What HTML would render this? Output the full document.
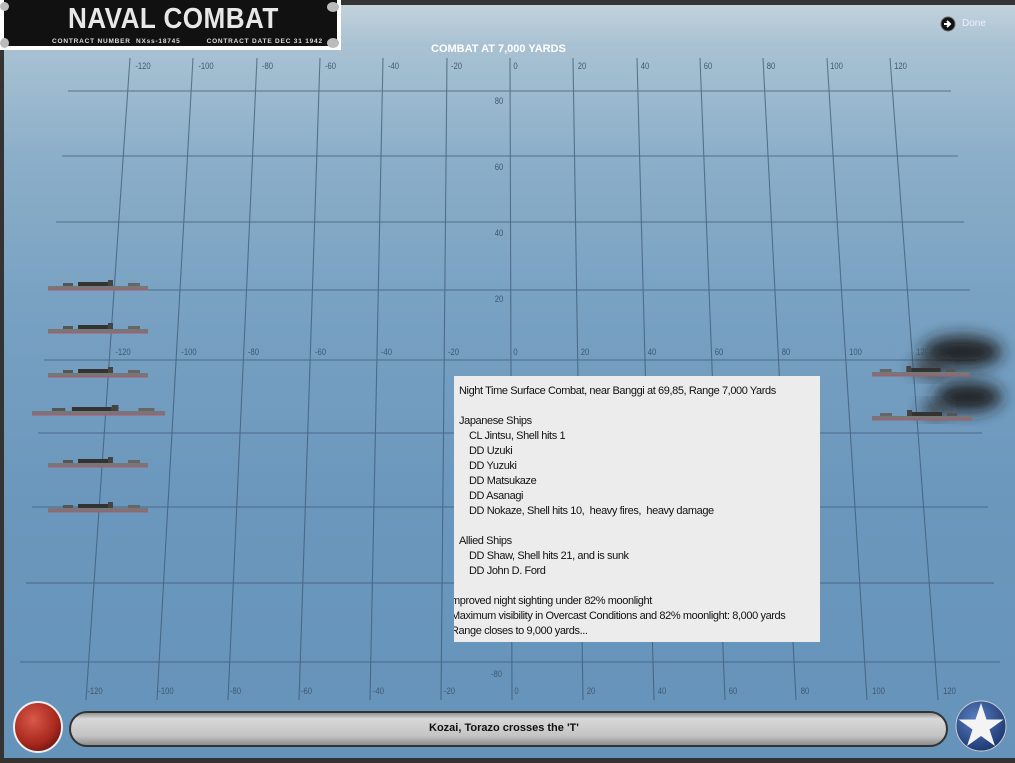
<!DOCTYPE html>
<html><head><meta charset="utf-8"><style>
body{margin:0;width:1015px;height:763px;overflow:hidden;background:#333;font-family:"Liberation Sans",sans-serif}
#sea{position:absolute;left:4px;top:5px;width:1011px;height:753px;background:linear-gradient(180deg,#c2d2dc 0px,#a9c2d3 40px,#8cafc9 150px,#78a1c2 300px,#6b97bd 500px,#6693ba 753px)}
.lbl{position:absolute;font-size:9px;color:#3f5870;transform:scaleX(.85)}
#box{position:absolute;left:454px;top:376px;width:366px;height:266px;background:#ececec;font-size:11px;color:#111;letter-spacing:-.4px;overflow:hidden}
#box div{position:absolute;white-space:nowrap}
</style></head><body>
<div id="sea"></div>
<svg width="1015" height="763" style="position:absolute;left:0;top:0">
<defs><filter id="b" x="-50%" y="-50%" width="200%" height="200%"><feGaussianBlur stdDeviation="8"/></filter>
<linearGradient id="bar" x1="0" y1="0" x2="0" y2="1"><stop offset="0" stop-color="#888"/><stop offset=".2" stop-color="#d8d8d8"/><stop offset=".7" stop-color="#c4c4c4"/><stop offset="1" stop-color="#888"/></linearGradient>
<radialGradient id="red" cx=".4" cy=".35" r=".7"><stop offset="0" stop-color="#d8584a"/><stop offset=".7" stop-color="#a8281e"/><stop offset="1" stop-color="#6a1410"/></radialGradient>
<radialGradient id="blue" cx=".4" cy=".35" r=".7"><stop offset="0" stop-color="#5a7fbf"/><stop offset="1" stop-color="#1a3570"/></radialGradient>
<g id="dd"><rect x="0" y="6" width="100" height="3" fill="#777"/><rect x="0" y="9" width="100" height="1.5" fill="#a06070"/><rect x="30" y="2" width="30" height="4" fill="#333"/><rect x="60" y="0" width="5" height="6" fill="#444"/><rect x="15" y="3" width="10" height="3" fill="#555"/><rect x="80" y="3" width="12" height="3" fill="#666"/></g>
</defs>
<g stroke="#3a5670" stroke-width="1.1" opacity=".7" fill="none">
<path d="M68 91H951M62 156H958M56 222H964M50 290H970M44 360H976M38 433H982M32 507H988M26 583H994M20 662H1000"/>
<path d="M130 58L86 700M193 58L157 700M257 58L228 700M320 58L299 700M383 58L370 700M447 58L441 700M510 58L512 700M573 58L583 700M637 58L654 700M700 58L725 700M763 58L796 700M827 58L867 700M890 58L938 700"/>
</g>
<ellipse cx="962" cy="352" rx="40" ry="16" fill="#1a1a1a" filter="url(#b)" opacity=".95"/>
<ellipse cx="930" cy="368" rx="18" ry="8" fill="#333" filter="url(#b)"/>
<ellipse cx="968" cy="397" rx="34" ry="15" fill="#1a1a1a" filter="url(#b)" opacity=".95"/>
<ellipse cx="935" cy="410" rx="14" ry="7" fill="#333" filter="url(#b)"/>
<use href="#dd" x="48" y="280"/><use href="#dd" x="48" y="323"/><use href="#dd" x="48" y="367"/><use href="#dd" x="48" y="457"/><use href="#dd" x="48" y="502"/>
<g transform="translate(32,405) scale(1.33,1)"><use href="#dd"/></g>
<g transform="translate(872,366) scale(-.98,1) translate(-100,0)"><use href="#dd"/></g>
<g transform="translate(872,410) scale(-1,1) translate(-100,0)"><use href="#dd"/></g>
<rect x="70" y="712" width="877" height="34" rx="17" fill="url(#bar)" stroke="#333" stroke-width="2"/>
<ellipse cx="38" cy="727" rx="24" ry="25" fill="url(#red)" stroke="#eee" stroke-width="2"/>
<circle cx="981" cy="726" r="25" fill="url(#blue)" stroke="#ccc" stroke-width="1"/>
<path d="M981 703L986.5 719.5H1003.5L989.5 729.5L995 746L981 736L967 746L972.5 729.5L958.5 719.5H975.5Z" fill="#f4f4f4"/>
<circle cx="948" cy="24" r="7" fill="#111" stroke="#666"/><path d="M944 24h5M947 21l3 3-3 3" stroke="#fff" stroke-width="2" fill="none"/>
</svg>
<div style="position:absolute;left:0;top:0;width:341px;height:50px;background:#fff"></div>
<div style="position:absolute;left:4px;top:0;width:333px;height:46px;background:#111"></div>
<div style="position:absolute;left:68px;top:3px;font-size:29px;font-weight:bold;color:#e8e8e8;letter-spacing:.5px;transform:scaleX(.9);transform-origin:left">NAVAL COMBAT</div>
<div style="position:absolute;left:52px;top:38px;font-size:6.5px;font-weight:bold;color:#ddd;letter-spacing:.8px;white-space:nowrap">CONTRACT NUMBER &nbsp;NXss-18745 &nbsp;&nbsp;&nbsp;&nbsp;&nbsp;&nbsp;&nbsp;&nbsp; CONTRACT DATE DEC 31 1942</div>
<div style="position:absolute;left:0;top:2px;width:9px;height:9px;border-radius:50%;background:#bbb"></div>
<div style="position:absolute;left:327px;top:2px;width:12px;height:10px;border-radius:50%;background:#bbb"></div>
<div style="position:absolute;left:327px;top:38px;width:12px;height:10px;border-radius:50%;background:#bbb"></div>
<div style="position:absolute;left:0;top:38px;width:9px;height:10px;border-radius:50%;background:#bbb"></div>
<div style="position:absolute;left:431px;top:43px;font-size:11px;color:#fff;font-weight:bold">COMBAT AT 7,000 YARDS</div>
<div style="position:absolute;left:962px;top:18px;font-size:10px;color:#eef">Done</div>
<div class="lbl" style="left:134px;top:61px">-120</div><div class="lbl" style="left:197px;top:61px">-100</div><div class="lbl" style="left:261px;top:61px">-80</div><div class="lbl" style="left:324px;top:61px">-60</div><div class="lbl" style="left:387px;top:61px">-40</div><div class="lbl" style="left:450px;top:61px">-20</div><div class="lbl" style="left:513px;top:61px">0</div><div class="lbl" style="left:577px;top:61px">20</div><div class="lbl" style="left:640px;top:61px">40</div><div class="lbl" style="left:703px;top:61px">60</div><div class="lbl" style="left:766px;top:61px">80</div><div class="lbl" style="left:829px;top:61px">100</div><div class="lbl" style="left:893px;top:61px">120</div>
<div class="lbl" style="left:494px;top:96px">80</div><div class="lbl" style="left:494px;top:162px">60</div><div class="lbl" style="left:494px;top:228px">40</div><div class="lbl" style="left:494px;top:294px">20</div><div class="lbl" style="left:490px;top:669px">-80</div>
<div class="lbl" style="left:114px;top:347px">-120</div><div class="lbl" style="left:180px;top:347px">-100</div><div class="lbl" style="left:247px;top:347px">-80</div><div class="lbl" style="left:314px;top:347px">-60</div><div class="lbl" style="left:380px;top:347px">-40</div><div class="lbl" style="left:447px;top:347px">-20</div><div class="lbl" style="left:513px;top:347px">0</div><div class="lbl" style="left:580px;top:347px">20</div><div class="lbl" style="left:647px;top:347px">40</div><div class="lbl" style="left:714px;top:347px">60</div><div class="lbl" style="left:781px;top:347px">80</div><div class="lbl" style="left:848px;top:347px">100</div><div class="lbl" style="left:915px;top:347px">120</div>
<div class="lbl" style="left:86px;top:686px">-120</div><div class="lbl" style="left:157px;top:686px">-100</div><div class="lbl" style="left:229px;top:686px">-80</div><div class="lbl" style="left:300px;top:686px">-60</div><div class="lbl" style="left:372px;top:686px">-40</div><div class="lbl" style="left:443px;top:686px">-20</div><div class="lbl" style="left:514px;top:686px">0</div><div class="lbl" style="left:586px;top:686px">20</div><div class="lbl" style="left:657px;top:686px">40</div><div class="lbl" style="left:728px;top:686px">60</div><div class="lbl" style="left:800px;top:686px">80</div><div class="lbl" style="left:871px;top:686px">100</div><div class="lbl" style="left:942px;top:686px">120</div>
<div id="box">
<div style="left:5px;top:9px">Night Time Surface Combat, near Banggi at 69,85, Range 7,000 Yards</div>
<div style="left:5px;top:39px">Japanese Ships</div>
<div style="left:15px;top:54px">CL Jintsu, Shell hits 1</div>
<div style="left:15px;top:69px">DD Uzuki</div>
<div style="left:15px;top:84px">DD Yuzuki</div>
<div style="left:15px;top:99px">DD Matsukaze</div>
<div style="left:15px;top:114px">DD Asanagi</div>
<div style="left:15px;top:129px">DD Nokaze, Shell hits 10, &nbsp;heavy fires, &nbsp;heavy damage</div>
<div style="left:5px;top:159px">Allied Ships</div>
<div style="left:15px;top:174px">DD Shaw, Shell hits 21, and is sunk</div>
<div style="left:15px;top:189px">DD John D. Ford</div>
<div style="left:-3px;top:219px">mproved night sighting under 82% moonlight</div>
<div style="left:-3px;top:234px">Maximum visibility in Overcast Conditions and 82% moonlight: 8,000 yards</div>
<div style="left:-3px;top:249px">Range closes to 9,000 yards...</div>
</div>
<div style="position:absolute;left:429px;top:722px;font-size:11px;font-weight:bold;color:#111">Kozai, Torazo crosses the 'T'</div>
</body></html>
